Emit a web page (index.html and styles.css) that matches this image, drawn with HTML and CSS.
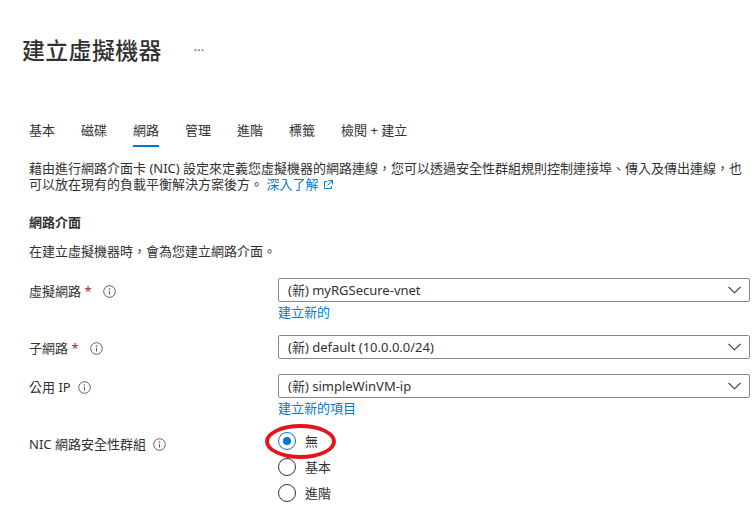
FILE: index.html
```html
<!DOCTYPE html>
<html lang="zh-Hant">
<head>
    <meta charset="UTF-8">
    <meta name="viewport" content="width=device-width, initial-scale=1.0">
    <title>建立虛擬機器</title>
    <link rel="stylesheet" href="styles.css">
</head>
<body>
    <div class="title-bar">
        <h1>建立虛擬機器</h1>
        <span class="more">···</span>
    </div>

    <div class="content">
        <nav class="tabs">
            <a class="tab">基本</a>
            <a class="tab">磁碟</a>
            <a class="tab active">網路</a>
            <a class="tab">管理</a>
            <a class="tab">進階</a>
            <a class="tab">標籤</a>
            <a class="tab">檢閱 + 建立</a>
        </nav>

        <p class="desc">藉由進行網路介面卡 (NIC) 設定來定義您虛擬機器的網路連線，您可以透過安全性群組規則控制連接埠、傳入及傳出連線，也可以放在現有的負載平衡解決方案後方。 <a class="link">深入了解<svg class="ext" width="10" height="10" viewBox="0 0 10 10"><path d="M4 1.5H1.5v7h7V6" fill="none" stroke="#0078d4" stroke-width="1"/><path d="M5.5 0.5h4v4M9.5 0.5L4.5 5.5" fill="none" stroke="#0078d4" stroke-width="1"/></svg></a></p>

        <h2>網路介面</h2>
        <p class="hint">在建立虛擬機器時，會為您建立網路介面。</p>

        <!-- 虛擬網路 -->
        <div class="field">
            <div class="label">虛擬網路 <span class="req">*</span>
                <svg class="info" width="13" height="13" viewBox="0 0 13 13"><circle cx="6.5" cy="6.5" r="5.8" fill="none" stroke="#605e5c" stroke-width="1"/><circle cx="6.5" cy="4" r="0.8" fill="#605e5c"/><path d="M6.5 5.8v3.8" stroke="#605e5c" stroke-width="1.1"/></svg>
            </div>
            <div class="control">
                <div class="select"><span>(新) myRGSecure-vnet</span>
                    <svg class="chevron" width="13" height="8" viewBox="0 0 13 8"><path d="M0.5 0.8l6 6 6-6" fill="none" stroke="#323130" stroke-width="1.1"/></svg>
                </div>
                <a class="link sub">建立新的</a>
            </div>
        </div>

        <!-- 子網路 -->
        <div class="field">
            <div class="label">子網路 <span class="req">*</span>
                <svg class="info" width="13" height="13" viewBox="0 0 13 13"><circle cx="6.5" cy="6.5" r="5.8" fill="none" stroke="#605e5c" stroke-width="1"/><circle cx="6.5" cy="4" r="0.8" fill="#605e5c"/><path d="M6.5 5.8v3.8" stroke="#605e5c" stroke-width="1.1"/></svg>
            </div>
            <div class="control">
                <div class="select"><span>(新) default (10.0.0.0/24)</span>
                    <svg class="chevron" width="13" height="8" viewBox="0 0 13 8"><path d="M0.5 0.8l6 6 6-6" fill="none" stroke="#323130" stroke-width="1.1"/></svg>
                </div>
            </div>
        </div>

        <!-- 公用 IP -->
        <div class="field">
            <div class="label">公用 IP
                <svg class="info" width="13" height="13" viewBox="0 0 13 13"><circle cx="6.5" cy="6.5" r="5.8" fill="none" stroke="#605e5c" stroke-width="1"/><circle cx="6.5" cy="4" r="0.8" fill="#605e5c"/><path d="M6.5 5.8v3.8" stroke="#605e5c" stroke-width="1.1"/></svg>
            </div>
            <div class="control">
                <div class="select"><span>(新) simpleWinVM-ip</span>
                    <svg class="chevron" width="13" height="8" viewBox="0 0 13 8"><path d="M0.5 0.8l6 6 6-6" fill="none" stroke="#323130" stroke-width="1.1"/></svg>
                </div>
                <a class="link sub">建立新的項目</a>
            </div>
        </div>

        <!-- NIC 網路安全性群組 -->
        <div class="field">
            <div class="label">NIC 網路安全性群組
                <svg class="info" width="13" height="13" viewBox="0 0 13 13"><circle cx="6.5" cy="6.5" r="5.8" fill="none" stroke="#605e5c" stroke-width="1"/><circle cx="6.5" cy="4" r="0.8" fill="#605e5c"/><path d="M6.5 5.8v3.8" stroke="#605e5c" stroke-width="1.1"/></svg>
            </div>
            <div class="control radios">
                <label class="radio checked"><span class="dot"></span>無</label>
                <label class="radio"><span class="dot"></span>基本</label>
                <label class="radio"><span class="dot"></span>進階</label>
                <span class="markup"></span>
            </div>
        </div>
    </div>
</body>
</html>
```

FILE: styles.css
```css
/* Page */
body {
    margin: 0;
    font-family: "Noto Sans", "Noto Sans CJK TC", sans-serif;
    font-size: 13px;
    color: #323130;
    background: #ffffff;
}

.title-bar {
    display: flex;
    align-items: center;
    padding: 38px 0 0 22px;
}

h1 {
    margin: 0;
    font-size: 23px;
    line-height: 24px;
    font-weight: 500;
    letter-spacing: 0.3px;
}

.more {
    margin-left: 32px;
    font-size: 13px;
    color: #605e5c;
    line-height: 24px;
}

.content {
    padding: 0 6px 0 29px;
}

/* Tabs */
.tabs {
    display: flex;
    gap: 26px;
    margin-top: 58px;
}

.tab {
    line-height: 20px;
    padding-bottom: 5px;
    border-bottom: 2px solid transparent;
    white-space: nowrap;
}

.tab.active {
    border-bottom-color: #0078d4;
}

/* Texts */
.desc {
    margin: 13px 0 0;
    line-height: 16px;
}

.link {
    color: #0078d4;
    cursor: pointer;
}

.ext {
    vertical-align: -1px;
    margin-left: 5px;
}

h2 {
    margin: 20px 0 0;
    font-size: 13px;
    font-weight: 600;
    line-height: 20px;
}

.hint {
    margin: 9px 0 0;
    line-height: 20px;
}

/* Form rows */
.field {
    display: flex;
    margin-top: 15px;
}

.hint + .field {
    margin-top: 17px;
}

.label {
    width: 249px;
    flex-shrink: 0;
    padding-top: 3px;
    line-height: 20px;
    white-space: nowrap;
}

.req {
    color: #a4262c;
    margin-right: 4px;
}

.info {
    vertical-align: -2px;
    margin-left: 4px;
}

.control {
    flex: 1;
    display: flex;
    flex-direction: column;
}

.select {
    height: 24px;
    box-sizing: border-box;
    border: 1px solid #8a8886;
    border-radius: 2px;
    display: flex;
    align-items: center;
    justify-content: space-between;
    padding: 0 8px 0 9px;
}

.select span {
    line-height: 20px;
}

.link.sub {
    margin-top: 2px;
    height: 16px;
    line-height: 16px;
    align-self: flex-start;
}

/* Radios */
.radios {
    position: relative;
    gap: 8px;
    padding-top: 1px;
}

.radio {
    display: flex;
    align-items: center;
    height: 18px;
    line-height: 18px;
}

.dot {
    width: 18px;
    height: 18px;
    box-sizing: border-box;
    border: 1px solid #323130;
    border-radius: 50%;
    margin-right: 9px;
    position: relative;
    flex-shrink: 0;
}

.radio.checked .dot {
    border-color: #0078d4;
}

.radio.checked .dot::after {
    content: "";
    position: absolute;
    left: 4px;
    top: 4px;
    width: 8px;
    height: 8px;
    border-radius: 50%;
    background: #0078d4;
}

/* red annotation ellipse */
.markup {
    position: absolute;
    left: -13px;
    top: -7px;
    width: 71px;
    height: 35px;
    box-sizing: border-box;
    border: 4px solid #e3141c;
    border-radius: 50%;
}
```
